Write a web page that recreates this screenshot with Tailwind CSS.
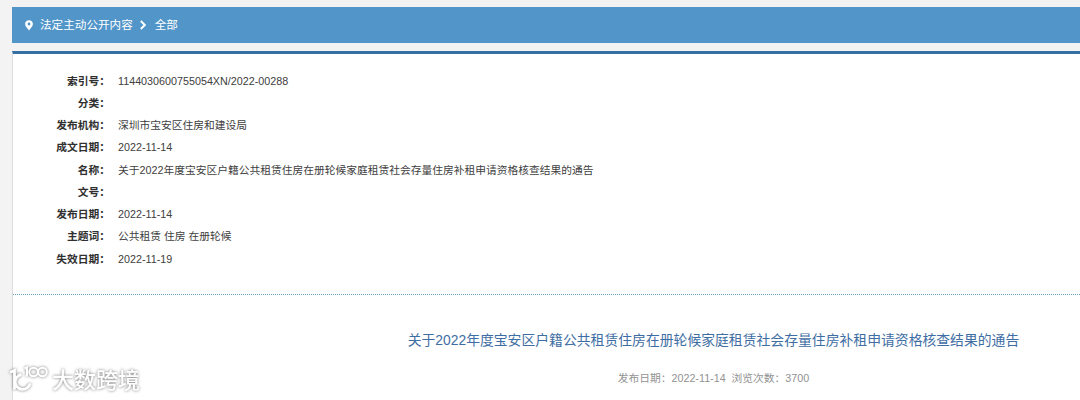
<!DOCTYPE html>
<html lang="zh-CN">
<head>
  <meta charset="UTF-8">
  <meta name="viewport" content="width=device-width, initial-scale=1.0">
  <title>法定主动公开内容</title>
  <script src="https://cdn.jsdelivr.net/npm/@tailwindcss/browser@4"></script>
</head>
<body class="bg-[#f3f3f3] h-[400px] overflow-hidden pl-3 pt-[7px] text-[10.75px] text-[#404040] font-['Liberation_Sans','Noto_Sans_CJK_SC',sans-serif]">

  <!-- Breadcrumb -->
  <nav class="flex items-center h-9 bg-[#5195c9] text-white text-[11.6px] pl-[13px]">
    <svg class="w-2 h-[11px]" viewBox="0 0 8 11" fill="currentColor"><path fill-rule="evenodd" d="M4 .2C1.800.2.1 1.900.1 4.100.1 6.400 2.400 8.300 4 10.500 5.600 8.300 7.900 6.400 7.900 4.100 7.900 1.900 6.200.2 4 .2ZM4 2.600a1.400 1.400 0 1 1 0 2.800 1.400 1.400 0 0 1 0-2.800Z"/></svg>
    <a href="#" class="ml-[7px]">法定主动公开内容</a>
    <svg class="w-[6px] h-[10px] ml-[7px]" viewBox="0 0 6 10" fill="none" stroke="currentColor" stroke-width="1.900"><path d="M.8 1 4.800 5 .8 9"/></svg>
    <a href="#" class="ml-[9px]">全部</a>
  </nav>

  <main class="mt-2 h-[349px] bg-white border-t-3 border-t-[#3470a2] border-l border-l-[#dcdcdc]">
    <!-- Document info -->
    <dl class="grid grid-cols-[97px_1fr] auto-rows-[22.25px] leading-[22.25px] gap-x-2 pt-[15.7px] h-[241px] border-b border-dotted border-b-[#68a0c2] whitespace-nowrap">
      <dt class="text-right font-bold text-[#303030]">索引号：</dt>
      <dd>1144030600755054XN/2022-00288</dd>
      <dt class="text-right font-bold text-[#303030]">分类：</dt>
      <dd></dd>
      <dt class="text-right font-bold text-[#303030]">发布机构：</dt>
      <dd>深圳市宝安区住房和建设局</dd>
      <dt class="text-right font-bold text-[#303030]">成文日期：</dt>
      <dd>2022-11-14</dd>
      <dt class="text-right font-bold text-[#303030]">名称：</dt>
      <dd>关于2022年度宝安区户籍公共租赁住房在册轮候家庭租赁社会存量住房补租申请资格核查结果的通告</dd>
      <dt class="text-right font-bold text-[#303030]">文号：</dt>
      <dd></dd>
      <dt class="text-right font-bold text-[#303030]">发布日期：</dt>
      <dd>2022-11-14</dd>
      <dt class="text-right font-bold text-[#303030]">主题词：</dt>
      <dd>公共租赁 住房 在册轮候</dd>
      <dt class="text-right font-bold text-[#303030]">失效日期：</dt>
      <dd>2022-11-19</dd>
    </dl>

    <!-- Article heading -->
    <div class="pl-[334px] text-center">
      <h1 class="pt-[33px] w-[733px] text-[13.83px] leading-6 text-[#3e6da3]">关于2022年度宝安区户籍公共租赁住房在册轮候家庭租赁社会存量住房补租申请资格核查结果的通告</h1>
      <p class="mt-[18px] w-[733px] leading-4 text-[#929292] whitespace-pre">发布日期：2022-11-14  浏览次数：3700</p>
    </div>
  </main>

  <!-- Watermark -->
  <div class="absolute left-2 top-[363px] flex items-center text-white drop-shadow-[0_0_1.5px_#777]">
    <svg class="w-[42px] h-8" viewBox="0 0 42 32" fill="none" stroke="currentColor" stroke-width="2.800">
      <path d="M2 9.500 6.500 7.500V26.500"/>
      <path d="M13.500 11.500A7.500 7.500 0 1 0 22 20.500"/>
      <path d="M16.500 5.500 19 4.500V13.500" stroke-width="2"/>
      <circle cx="25.500" cy="9" r="4.300" stroke-width="2"/>
      <circle cx="34.500" cy="9" r="4.300" stroke-width="2"/>
    </svg>
    <span class="ml-[2px] text-[22px] leading-[30px] pb-[2px] font-medium font-['Noto_Sans_CJK_SC',sans-serif]">大数跨境</span>
  </div>

</body>
</html>
